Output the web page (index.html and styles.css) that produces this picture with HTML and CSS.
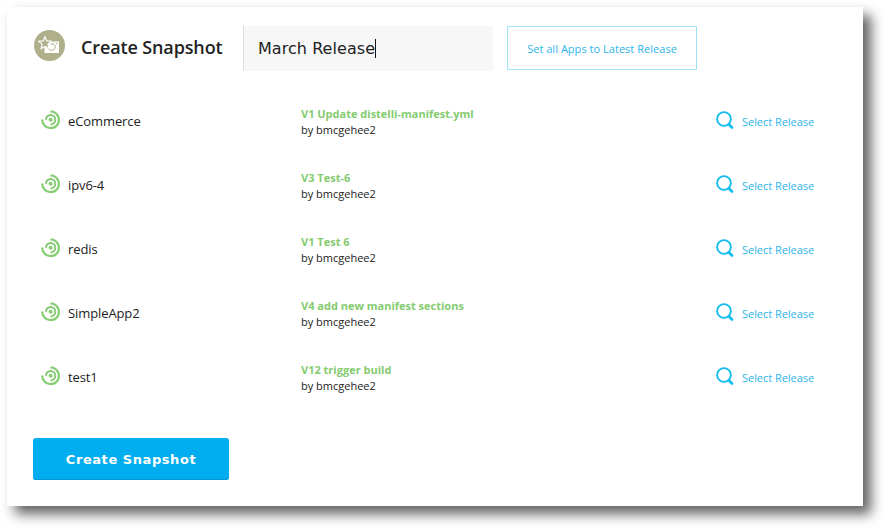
FILE: index.html
```html
<!DOCTYPE html>
<html lang="en">
<head>
<meta charset="utf-8">
<title>Create Snapshot</title>
<link rel="stylesheet" href="styles.css">
</head>
<body>
<svg class="defs" aria-hidden="true">
  <symbol id="swirl" viewBox="0 0 20 20">
    <g fill="none" stroke="#85cb70">
      <path stroke-width="2.2" d="M1.2 9.5A8.4 8.4 0 1 0 9.6 1.4"/>
      <path stroke-width="2" d="M4.9 9.8A4.7 4.7 0 1 1 9.6 14.5"/>
    </g>
    <circle cx="9.6" cy="9.8" r="2" fill="#85cb70"/>
  </symbol>
  <symbol id="search" viewBox="0 0 18 19">
    <circle cx="8" cy="8" r="6.9" fill="none" stroke="#14bcf0" stroke-width="1.9"/>
    <path d="M12.8 13.2l3.2 3.2" stroke="#14bcf0" stroke-width="2.8" stroke-linecap="round"/>
  </symbol>
</svg>
<main class="card">
  <header class="head">
    <svg class="badge" viewBox="0 0 31 31">
      <circle cx="15.5" cy="15.5" r="15.5" fill="#afaf8b"/>
      <path d="M10.5 12.5h5l1-.7h3l1-.3h4.5v11.5H10.5z" fill="#fff"/>
      <path d="M11 6.8l1.7 4.1 4.6.4-3.4 3 1 4.5-3.9-2.4-3.9 2.4 1-4.5-3.4-3 4.6-.4z" fill="#afaf8b" stroke="#fff" stroke-width="1.1"/>
      <path d="M19.3 13.7a3.6 3.6 0 1 1-4.8 5M16.5 14h2.8" fill="none" stroke="#afaf8b" stroke-width="1"/>
      <path d="M22 13.5h1.6" stroke="#afaf8b"/>
    </svg>
    <h1 class="title">Create Snapshot</h1>
    <div class="name-field">March Release<span class="caret"></span></div>
    <button class="outline">Set all Apps to Latest Release</button>
  </header>
  <section class="apps">
    <div class="app"><svg class="swirl"><use href="#swirl"/></svg><span class="app-name">eCommerce</span><div class="release"><b>V1 Update distelli-manifest.yml</b><span>by bmcgehee2</span></div><a class="select"><svg class="search"><use href="#search"/></svg>Select Release</a></div>
    <div class="app"><svg class="swirl"><use href="#swirl"/></svg><span class="app-name">ipv6-4</span><div class="release"><b>V3 Test-6</b><span>by bmcgehee2</span></div><a class="select"><svg class="search"><use href="#search"/></svg>Select Release</a></div>
    <div class="app"><svg class="swirl"><use href="#swirl"/></svg><span class="app-name">redis</span><div class="release"><b>V1 Test 6</b><span>by bmcgehee2</span></div><a class="select"><svg class="search"><use href="#search"/></svg>Select Release</a></div>
    <div class="app"><svg class="swirl"><use href="#swirl"/></svg><span class="app-name">SimpleApp2</span><div class="release"><b>V4 add new manifest sections</b><span>by bmcgehee2</span></div><a class="select"><svg class="search"><use href="#search"/></svg>Select Release</a></div>
    <div class="app"><svg class="swirl"><use href="#swirl"/></svg><span class="app-name">test1</span><div class="release"><b>V12 trigger build</b><span>by bmcgehee2</span></div><a class="select"><svg class="search"><use href="#search"/></svg>Select Release</a></div>
  </section>
  <button class="primary">Create Snapshot</button>
</main>
</body>
</html>
```
FILE: styles.css
```css
* { box-sizing: border-box; }
body {
  margin: 0;
  padding: 7px;
  height: 529px;
  overflow: hidden;
  background: #fff;
  color: #222;
  font-family: "Open Sans", sans-serif;
}
.defs { display: none; }
.card {
  width: 856px;
  height: 499px;
  padding: 19px 26px 0;
  background: #fff;
  box-shadow: 8px 8px 12px rgba(0, 0, 0, .62);
}
.head { display: flex; align-items: flex-start; height: 45px; }
.badge { width: 31px; height: 31px; margin: 4px 0 0 1px; }
.title {
  width: 162px;
  margin: 0 0 0 16px;
  font-size: 18px;
  font-weight: 600;
  line-height: 43px;
  letter-spacing: -.13px;
  white-space: nowrap;
}
.name-field {
  display: flex;
  align-items: center;
  width: 250px;
  height: 45px;
  padding-left: 14px;
  border-left: 1px solid #ddd;
  background: #f7f7f7;
  font: 16px "DejaVu Sans", sans-serif;
  letter-spacing: .05px;
}
.caret { width: 1px; height: 19px; background: #111; }
.outline {
  width: 190px;
  height: 44px;
  margin-left: 14px;
  padding: 0;
  border: 1px solid #a0e2f8;
  background: #fff;
  color: #2bb5ea;
  font: 11px "Open Sans", sans-serif;
  letter-spacing: .03px;
}
.apps { padding-top: 18px; }
.app { display: flex; height: 64px; padding: 17px 0 0 8px; }
.swirl { width: 20px; height: 20px; margin-top: 4px; }
.app-name { width: 233px; margin-left: 7px; font-size: 13px; line-height: 30px; letter-spacing: -.1px; }
.release { display: flex; flex-direction: column; width: 415px; font-size: 11px; line-height: 16px; }
.release b { color: #85cb70; }
.select { display: flex; color: #2bb5ea; font-size: 11px; line-height: 32px; letter-spacing: -.04px; white-space: nowrap; }
.search { width: 18px; height: 19px; margin: 5px 8px 0 0; }
.primary {
  display: block;
  width: 196px;
  height: 42px;
  margin-top: 29px;
  padding: 0;
  border: 0;
  border-radius: 3px;
  background: #00adee;
  box-shadow: inset 0 -1px #0099d3;
  color: #fff;
  font: bold 13px "DejaVu Sans", sans-serif;
  letter-spacing: .56px;
}
```
